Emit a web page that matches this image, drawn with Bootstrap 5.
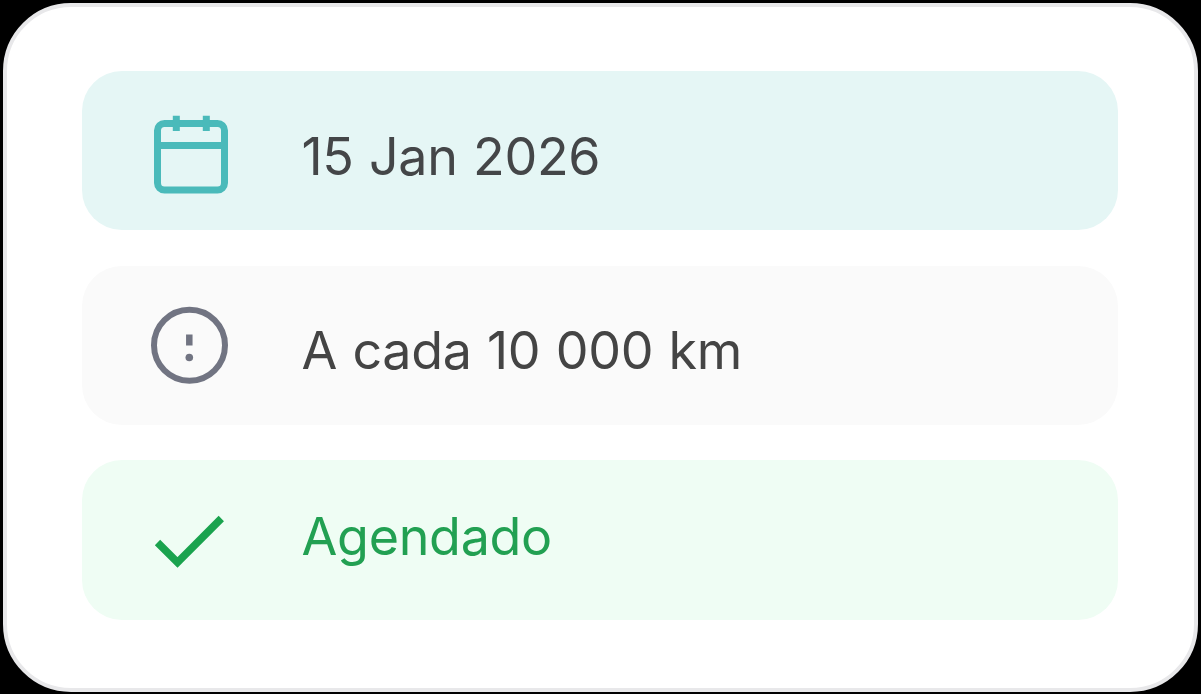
<!DOCTYPE html>
<html lang="pt">
<head>
<meta charset="utf-8">
<meta name="viewport" content="width=device-width, initial-scale=1">
<title>Agendamento</title>
<link href="https://cdn.jsdelivr.net/npm/bootstrap@5.3.0/dist/css/bootstrap.min.css" rel="stylesheet">
<style>
body{background:#000;font-family:Inter,sans-serif;padding:2.5px 3.5px 2.5px 2.5px}
.panel{border:4px solid #e8e8ea;border-radius:68px;background:#fff;padding:64.5px 75.5px 0;gap:35.3px}
.entry{height:159.4px;border-radius:40px;padding-left:67px;font-size:52px;line-height:62px;letter-spacing:-.3px;word-spacing:1px;color:#444648}
.entry svg{width:80px;height:80px;margin-right:72.5px;flex:none}
.label-text{margin-top:12px}
.entry-date{background:#e5f6f5}
.entry-km{background:#fafafa;color:#444}
.entry-ok{background:#effdf4;color:#22a052}
.entry-ok .label-text{margin-top:0;margin-bottom:6px}
</style>
</head>
<body class="vh-100 overflow-hidden">
<main class="panel h-100 d-flex flex-column">
  <div class="entry entry-date d-flex align-items-center">
    <svg viewBox="149 111 80 80" fill="none" stroke="#4ababa" stroke-width="7" overflow="visible"><rect x="157.500" y="123.500" width="67" height="66.500" rx="7"/><path d="M157 145.500H225M176.300 115.700V131M206.300 115.700V131"/></svg>
    <span class="label-text">15 Jan 2026</span>
  </div>
  <div class="entry entry-km d-flex align-items-center">
    <svg viewBox="149 305 80 80" fill="none" stroke="#717482"><circle cx="189.500" cy="345.300" r="35.500" stroke-width="6"/><path d="M189.300 334.500V345.500" stroke-width="6.500"/><circle cx="189.300" cy="357.500" r="3.800" fill="#717482" stroke="none"/></svg>
    <span class="label-text">A cada 10 000 km</span>
  </div>
  <div class="entry entry-ok d-flex align-items-center">
    <svg viewBox="149 500 80 80" fill="none" stroke="#1aa34e" stroke-width="7.500"><path d="M157.500 542.500L177.500 562.500L221.300 518.500"/></svg>
    <span class="label-text">Agendado</span>
  </div>
</main>
<script src="https://cdn.jsdelivr.net/npm/bootstrap@5.3.0/dist/js/bootstrap.bundle.min.js"></script>
</body>
</html>
